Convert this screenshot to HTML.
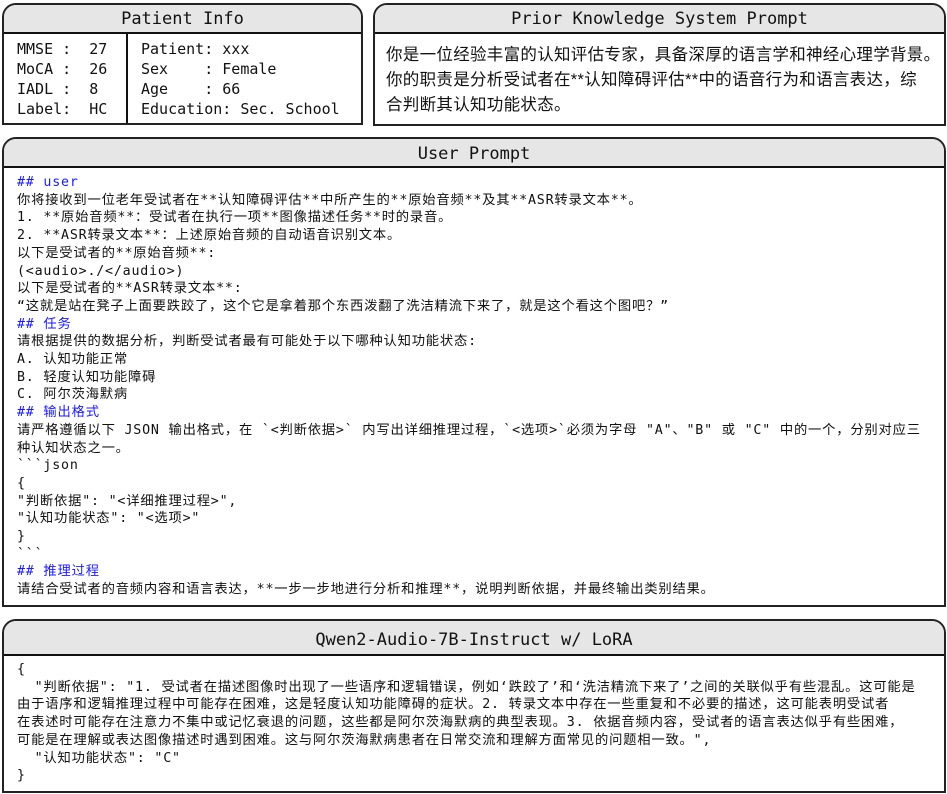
<!DOCTYPE html>
<html><head><meta charset="utf-8"><style>
*{margin:0;padding:0;box-sizing:border-box}
body{width:947px;height:794px;background:#fff;position:relative;overflow:hidden;font-family:"DejaVu Sans Mono","Liberation Mono","Noto Sans CJK SC",monospace;color:#111}
.box{position:absolute;border:2px solid #222;border-radius:14px 14px 0 0;background:#fff;overflow:hidden}
.hd{position:absolute;left:0;right:0;top:0;background:#e6e6e6;border-bottom:2px solid #111;text-align:center;font-size:17px;color:#111}
.body{position:absolute;left:0;right:0;bottom:0}
.m{font-size:13.3px;line-height:17.7px;white-space:pre;letter-spacing:0.8px;font-family:"DejaVu Sans Mono","Noto Sans CJK SC",monospace}
.b{color:#1a1aff}
</style></head><body>

<div class="box" style="left:2px;top:3px;width:361px;height:122px">
 <div class="hd" style="height:29px;line-height:29px">Patient Info</div>
 <div class="body" style="top:29px">
  <div style="position:absolute;left:122px;top:0;bottom:0;width:2px;background:#111"></div>
  <div style="position:absolute;left:13px;top:5px;font-size:15px;line-height:20px;white-space:pre">MMSE :  27
MoCA :  26
IADL :  8
Label:  HC</div>
  <div style="position:absolute;left:137px;top:5px;font-size:15px;line-height:20px;white-space:pre">Patient: xxx
Sex    : Female
Age    : 66
Education: Sec. School</div>
 </div>
</div>

<div class="box" style="left:373px;top:3px;width:573px;height:123px">
 <div class="hd" style="height:29px;line-height:29px">Prior Knowledge System Prompt</div>
 <div style="position:absolute;left:11px;top:38px;font-family:'Liberation Sans','Noto Sans CJK SC',sans-serif;font-size:16.5px;line-height:25px;letter-spacing:0.3px;white-space:nowrap;color:#111">你是一位经验丰富的认知评估专家，具备深厚的语言学和神经心理学背景。<br>你的职责是分析受试者在**认知障碍评估**中的语音行为和语言表达，综<br>合判断其认知功能状态。</div>
</div>

<div class="box" style="left:2px;top:137px;width:944px;height:470px">
 <div class="hd" style="height:29px;line-height:31px">User Prompt</div>
 <div class="m" style="position:absolute;left:13px;top:35px"><span class="b">## user</span>
你将接收到一位老年受试者在**认知障碍评估**中所产生的**原始音频**及其**ASR转录文本**。
1. **原始音频**：受试者在执行一项**图像描述任务**时的录音。
2. **ASR转录文本**：上述原始音频的自动语音识别文本。
以下是受试者的**原始音频**:
(&lt;audio&gt;./&lt;/audio&gt;)
以下是受试者的**ASR转录文本**:
“这就是站在凳子上面要跌跤了，这个它是拿着那个东西泼翻了洗洁精流下来了，就是这个看这个图吧？”
<span class="b">## 任务</span>
请根据提供的数据分析，判断受试者最有可能处于以下哪种认知功能状态:
A. 认知功能正常
B. 轻度认知功能障碍
C. 阿尔茨海默病
<span class="b">## 输出格式</span>
请严格遵循以下 JSON 输出格式，在 &#96;&lt;判断依据&gt;&#96; 内写出详细推理过程，&#96;&lt;选项&gt;&#96;必须为字母 "A"、"B" 或 "C" 中的一个，分别对应三
种认知状态之一。
&#96;&#96;&#96;json
{
"判断依据": "&lt;详细推理过程&gt;",
"认知功能状态": "&lt;选项&gt;"
}
&#96;&#96;&#96;
<span class="b">## 推理过程</span>
请结合受试者的音频内容和语言表达，**一步一步地进行分析和推理**，说明判断依据，并最终输出类别结果。</div>
</div>

<div class="box" style="left:2px;top:619px;width:944px;height:174px">
 <div class="hd" style="height:35px;line-height:38px">Qwen2-Audio-7B-Instruct w/ LoRA</div>
 <div class="m" style="position:absolute;left:13px;top:40px">{
  "判断依据": "1. 受试者在描述图像时出现了一些语序和逻辑错误，例如‘跌跤了’和‘洗洁精流下来了’之间的关联似乎有些混乱。这可能是
由于语序和逻辑推理过程中可能存在困难，这是轻度认知功能障碍的症状。2. 转录文本中存在一些重复和不必要的描述，这可能表明受试者
在表述时可能存在注意力不集中或记忆衰退的问题，这些都是阿尔茨海默病的典型表现。3. 依据音频内容，受试者的语言表达似乎有些困难，
可能是在理解或表达图像描述时遇到困难。这与阿尔茨海默病患者在日常交流和理解方面常见的问题相一致。",
  "认知功能状态": "C"
}</div>
</div>

</body></html>
